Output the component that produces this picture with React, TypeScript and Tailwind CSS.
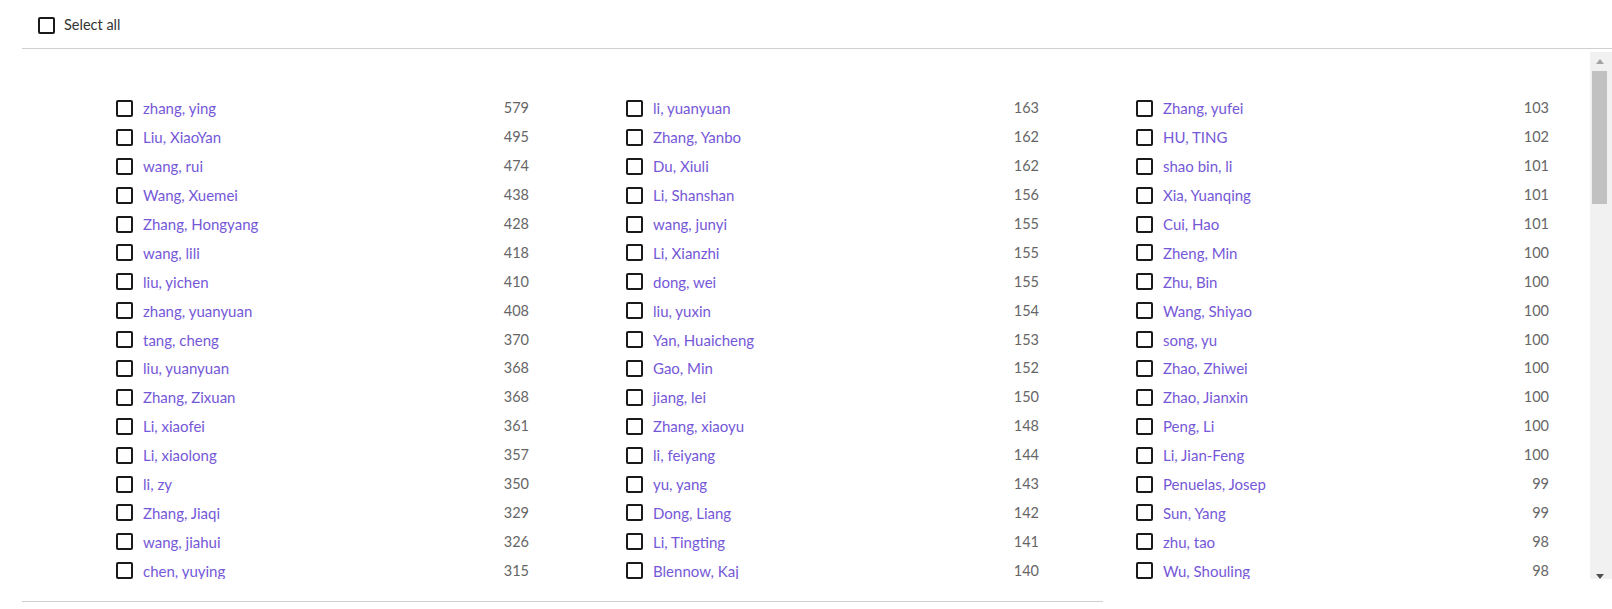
import React from "react";

type Row = [string, number];

const columns: Row[][] = [
  [
    ["zhang, ying", 579],
    ["Liu, XiaoYan", 495],
    ["wang, rui", 474],
    ["Wang, Xuemei", 438],
    ["Zhang, Hongyang", 428],
    ["wang, lili", 418],
    ["liu, yichen", 410],
    ["zhang, yuanyuan", 408],
    ["tang, cheng", 370],
    ["liu, yuanyuan", 368],
    ["Zhang, Zixuan", 368],
    ["Li, xiaofei", 361],
    ["Li, xiaolong", 357],
    ["li, zy", 350],
    ["Zhang, Jiaqi", 329],
    ["wang, jiahui", 326],
    ["chen, yuying", 315],
  ],
  [
    ["li, yuanyuan", 163],
    ["Zhang, Yanbo", 162],
    ["Du, Xiuli", 162],
    ["Li, Shanshan", 156],
    ["wang, junyi", 155],
    ["Li, Xianzhi", 155],
    ["dong, wei", 155],
    ["liu, yuxin", 154],
    ["Yan, Huaicheng", 153],
    ["Gao, Min", 152],
    ["jiang, lei", 150],
    ["Zhang, xiaoyu", 148],
    ["li, feiyang", 144],
    ["yu, yang", 143],
    ["Dong, Liang", 142],
    ["Li, Tingting", 141],
    ["Blennow, Kaj", 140],
  ],
  [
    ["Zhang, yufei", 103],
    ["HU, TING", 102],
    ["shao bin, li", 101],
    ["Xia, Yuanqing", 101],
    ["Cui, Hao", 101],
    ["Zheng, Min", 100],
    ["Zhu, Bin", 100],
    ["Wang, Shiyao", 100],
    ["song, yu", 100],
    ["Zhao, Zhiwei", 100],
    ["Zhao, Jianxin", 100],
    ["Peng, Li", 100],
    ["Li, Jian-Feng", 100],
    ["Penuelas, Josep", 99],
    ["Sun, Yang", 99],
    ["zhu, tao", 98],
    ["Wu, Shouling", 98],
  ],
];

function Box() {
  return <span className="w-[17px] h-[17px] shrink-0 border-2 border-[#1a1a1a] rounded-[2px] bg-white" />;
}

function Scrollbar() {
  return (
    <div className="w-[22px] shrink-0 bg-[#f1f1f1] flex flex-col items-start pl-[2px]">
      <div className="h-[19px] w-[15px] flex items-center justify-center">
        <svg width="8" height="5" viewBox="0 0 8 5">
          <path d="M0 5 L4 0 L8 5 Z" fill="#a3a3a3" />
        </svg>
      </div>
      <div className="w-[15px] h-[133px] bg-[#c1c1c1]" />
      <div className="mt-auto h-[5px] w-[15px] flex items-start justify-center overflow-hidden">
        <svg width="8" height="5" viewBox="0 0 8 5">
          <path d="M0 0 L8 0 L4 5 Z" fill="#505050" />
        </svg>
      </div>
    </div>
  );
}

export default function App() {
  return (
    <div className="w-[1612px] h-[609px] bg-white pl-[22px] font-['Lato','Liberation_Sans',sans-serif] overflow-hidden">
      <div className="h-[49px] border-b border-[#cfcfcf] flex items-center pl-[16px] gap-[9px] pt-[2px]">
        <Box />
        <span className="text-[14.5px] text-[#333]">Select all</span>
      </div>

      <div className="mt-[3px] h-[527px] flex">
        <div className="flex-1 overflow-hidden">
          <div className="flex gap-x-[97px] pl-[94px] pt-[42px]">
            {columns.map((col, i) => (
              <div key={i} className="flex flex-col w-[413px] shrink-0">
                {col.map(([name, n], j) => (
                  <label key={j} className="flex items-center h-[28.9px] cursor-pointer">
                    <Box />
                    <span className="ml-[10px] flex-1 text-[15px] leading-[18px] text-[#7558d8]">{name}</span>
                    <span className="text-[14.5px] leading-[18px] text-[#666]">{n}</span>
                  </label>
                ))}
              </div>
            ))}
          </div>
        </div>
        <Scrollbar />
      </div>

      <div className="mt-[22px] w-[1081px] border-t border-[#cfcfcf]" />
    </div>
  );
}
